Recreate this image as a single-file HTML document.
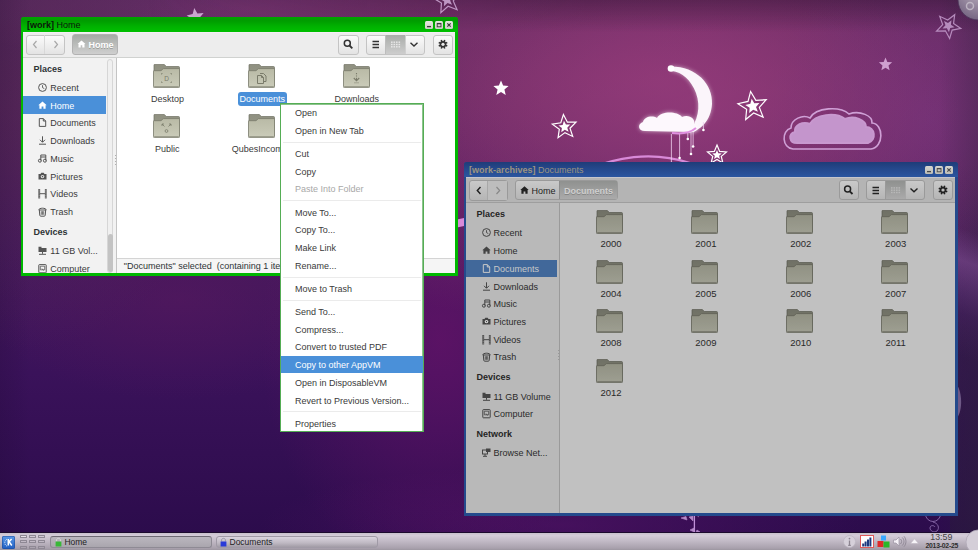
<!DOCTYPE html><html><head><meta charset="utf-8"><style>
*{margin:0;padding:0;box-sizing:border-box}
html,body{width:978px;height:550px;overflow:hidden;font-family:"Liberation Sans",sans-serif;font-size:9px;color:#2e3436;background:#3a1558}
.a{position:absolute}
.t{position:absolute;white-space:nowrap;line-height:12px;height:12px}
.b{font-weight:bold}
.btn{position:absolute;border:1px solid #c4c4c4;border-radius:3px;background:linear-gradient(#fbfbfb,#e3e3e3)}
.ic{position:absolute;overflow:visible}
</style></head><body>
<div class="a" style="left:0;top:0;width:978px;height:533px;background:
radial-gradient(ellipse 260px 150px at 700px 110px, rgba(150,60,125,0.6), rgba(150,60,125,0) 100%),
radial-gradient(ellipse 160px 180px at 930px 120px, rgba(118,52,124,0.7), rgba(118,52,124,0) 100%),
radial-gradient(ellipse 540px 250px at 660px 80px, rgba(140,56,116,0.98), rgba(140,56,116,0) 100%),
radial-gradient(ellipse 180px 240px at 440px 340px, rgba(100,18,104,0.75), rgba(100,18,104,0) 100%),
radial-gradient(ellipse 300px 60px at 560px 525px, rgba(80,18,100,0.7), rgba(80,18,100,0) 100%),
radial-gradient(ellipse 200px 260px at 30px 90px, rgba(90,45,90,0.5), rgba(90,45,90,0) 100%),
radial-gradient(ellipse 300px 60px at 250px 10px, rgba(112,50,110,0.85), rgba(112,50,110,0) 100%),
radial-gradient(ellipse 200px 100px at 180px 300px, rgba(90,24,95,0.5), rgba(90,24,95,0) 100%),
linear-gradient(180deg,#4e2456 0%,#512058 20%,#461a5c 45%,#3a125a 70%,#2c0c4c 100%);"></div>
<div class="a" style="left:0;top:0;width:978px;height:32px;background:linear-gradient(rgba(30,10,35,0.35),rgba(30,10,35,0));-webkit-mask-image:linear-gradient(90deg,rgba(0,0,0,0) 15%,#000 60%);mask-image:linear-gradient(90deg,rgba(0,0,0,0) 15%,#000 60%)"></div>
<div class="a" style="left:940px;top:0;width:38px;height:533px;background:linear-gradient(90deg,rgba(45,35,60,0),rgba(45,35,60,0.3))"></div>
<div class="a" style="left:0;top:0;width:30px;height:533px;background:linear-gradient(90deg,rgba(20,5,35,0.15),rgba(20,5,35,0))"></div>
<div class="a" style="left:950px;top:160px;width:28px;height:373px;background:linear-gradient(rgba(40,30,55,0) 0%,rgba(40,30,55,0.1) 25%,rgba(40,30,55,0.4) 45%,rgba(40,30,55,0.4) 100%)"></div>
<div class="a" style="left:940px;top:170px;width:38px;height:200px;background:linear-gradient(200deg,rgba(130,80,150,0) 30%,rgba(130,80,150,0.55) 45%,rgba(100,50,130,0.2) 70%,rgba(100,50,130,0) 90%)"></div>
<svg class="a" style="left:0;top:0" width="978" height="533"><defs><filter id="glow" x="-50%" y="-50%" width="200%" height="200%"><feGaussianBlur stdDeviation="2.2"/></filter></defs><path d="M194.25,8.09 L197.42,13.38 L203.59,13.05 L199.54,17.71 L201.75,23.47 L196.07,21.06 L191.27,24.95 L191.81,18.80 L186.64,15.44 L192.65,14.05Z" fill="#c9a6cf"/><path d="M954.70,14.71 L953.56,23.46 L960.82,28.46 L952.15,30.08 L949.64,38.53 L945.42,30.79 L936.61,31.01 L942.67,24.60 L939.74,16.29 L947.70,20.07Z" fill="none" stroke="#c49ccc" stroke-width="1.2" opacity="0.85"/><path d="M951.50,20.26 L950.93,24.63 L954.56,27.13 L950.23,27.94 L948.97,32.16 L946.86,28.29 L942.45,28.40 L945.48,25.20 L944.02,21.04 L948.00,22.94Z" fill="#c49ccc" opacity="0.85"/><path d="M444.57,-13.79 L449.76,-5.66 L459.36,-6.57 L453.24,0.88 L457.07,9.73 L448.09,6.20 L440.86,12.58 L441.44,2.96 L433.14,-1.95 L442.47,-4.38Z" fill="none" stroke="#c9a3cf" stroke-width="1.2" opacity="0.9"/><path d="M445.78,-6.89 L448.38,-2.83 L453.18,-3.29 L450.12,0.44 L452.04,4.86 L447.55,3.10 L443.93,6.29 L444.22,1.48 L440.07,-0.97 L444.73,-2.19Z" fill="#c9a3cf" opacity="0.9"/><path d="M501.00,80.50 L503.12,85.59 L508.61,86.03 L504.42,89.61 L505.70,94.97 L501.00,92.10 L496.30,94.97 L497.58,89.61 L493.39,86.03 L498.88,85.59Z" fill="#ffffff" stroke="none" stroke-width="1" opacity="1"/><path d="M563.41,114.55 L567.40,122.18 L576.01,122.12 L569.98,128.27 L572.70,136.43 L564.99,132.60 L558.06,137.71 L559.32,129.20 L552.32,124.19 L560.81,122.75Z" fill="none" stroke="#ffffff" stroke-width="1.2" opacity="1"/><path d="M563.96,120.77 L565.95,124.59 L570.25,124.56 L567.24,127.63 L568.60,131.72 L564.75,129.80 L561.28,132.36 L561.91,128.10 L558.41,125.59 L562.65,124.88Z" fill="#ffffff" opacity="1"/><path d="M750.61,91.45 L755.87,100.34 L766.18,99.72 L759.35,107.47 L763.12,117.09 L753.64,112.98 L745.66,119.54 L746.63,109.26 L737.93,103.70 L748.01,101.44Z" fill="none" stroke="#ffffff" stroke-width="1.2" opacity="1"/><path d="M751.66,98.87 L754.28,103.32 L759.44,103.01 L756.02,106.89 L757.91,111.70 L753.17,109.64 L749.18,112.92 L749.67,107.78 L745.31,105.00 L750.36,103.87Z" fill="#ffffff" opacity="1"/><path d="M717.00,145.00 L719.65,151.36 L726.51,151.91 L721.28,156.39 L722.88,163.09 L717.00,159.50 L711.12,163.09 L712.72,156.39 L707.49,151.91 L714.35,151.36Z" fill="none" stroke="#ffffff" stroke-width="1.2" opacity="1"/><path d="M717.00,150.00 L718.32,153.18 L721.76,153.45 L719.14,155.70 L719.94,159.05 L717.00,157.25 L714.06,159.05 L714.86,155.70 L712.24,153.45 L715.68,153.18Z" fill="#ffffff" opacity="1"/><path d="M885.50,57.50 L887.35,61.95 L892.16,62.34 L888.50,65.47 L889.61,70.16 L885.50,67.65 L881.39,70.16 L882.50,65.47 L878.84,62.34 L883.65,61.95Z" fill="#cfa0d0" stroke="none" stroke-width="1" opacity="1"/><path d="M797,143 C789,143 788,134 795,132 C794,125 803,121 810,124 C815,114 836,112 845,119 C854,115 866,120 866,127 C875,127 877,140 868,143 Z" fill="#c495cc" stroke="#c898cf" stroke-width="2"/><path d="M793,149 C782,148 781,131 791,128 C791,119 803,114 810,118 C816,107 840,106 849,114 C860,110 873,116 872,123 C884,124 884,147 871,149 Z" fill="none" stroke="#cfa0d6" stroke-width="1.6"/><path d="M457,219.5 L464,218 L464,226 L457,227.5 Z" fill="#d98ad9"/><path d="M585,170 C615,158 650,150 690,163" fill="none" stroke="#d88ad8" stroke-width="2.2"/><path d="M670,66.5 C696,66 713,84 712,104 C711,120 701,131 688,133 C698,121 701,107 696,93 C691,80 682,72 672,71 Z" fill="#ffffff" opacity="0.55" filter="url(#glow)"/><path d="M670,66.5 C696,66 713,84 712,104 C711,120 701,131 688,133 C698,121 701,107 696,93 C691,80 682,72 672,71 Z" fill="#fbf5fb"/><circle cx="671" cy="68.5" r="3.3" fill="#ffffff"/><path d="M671.4,134 V163" stroke="#f0d0f0" stroke-width="0.8"/><circle cx="671.4" cy="163" r="1.3" fill="#fff"/><path d="M679.6,133 V158" stroke="#f0d0f0" stroke-width="0.8"/><circle cx="679.6" cy="158" r="1.3" fill="#fff"/><path d="M687.8,132 V139" stroke="#f0d0f0" stroke-width="0.8"/><circle cx="687.8" cy="139" r="1.3" fill="#fff"/><path d="M691,132 V154" stroke="#f0d0f0" stroke-width="0.8"/><circle cx="691" cy="154" r="1.3" fill="#fff"/><path d="M693.1,131 V146.5" stroke="#f0d0f0" stroke-width="0.8"/><circle cx="693.1" cy="146.5" r="1.3" fill="#fff"/><path d="M703.4,122 V130" stroke="#f0d0f0" stroke-width="0.8"/><circle cx="703.4" cy="130" r="1.3" fill="#fff"/><path d="M645,131 C638,131 637,124 643,122 C644,117 652,115 657,118 C661,111 677,111 682,117 C689,114 696,119 694,124 C699,126 698,132 692,132 Z" fill="#ffffff" opacity="0.6" filter="url(#glow)"/><path d="M645,131 C638,131 637,124 643,122 C644,117 652,115 657,118 C661,111 677,111 682,117 C689,114 696,119 694,124 C699,126 698,132 692,132 Z" fill="#fdf8fd"/><path d="M672,133 C680,134 690,133 696,128" fill="none" stroke="#e090e0" stroke-width="2"/><path d="M694.4,516 V532" stroke="#c090d8" stroke-width="1.3"/><path d="M681,518 L686,516.5 L687,520 Z M689,517 L693,516 L693,521 Z M697,515.5 L699,517 M690,530 L694,528 L694,532 Z M697,530 L700,532 L696,532 Z" fill="#b488c8" stroke="#b488c8" stroke-width="0.6"/><circle cx="933" cy="514" r="7.5" fill="none" stroke="#8a6aaa" stroke-width="0.9"/><path d="M933,522 C938,523 940,528 937,531 C934,533 930,531 930,528 C930,525 934,525 935,527" fill="none" stroke="#8a6aaa" stroke-width="0.9"/><path d="M957,385 C962,392 963,410 957,418 Z" fill="#9a86b0" opacity="0.6"/><defs><radialGradient id="cash" cx="0.55" cy="0.2" r="0.9"><stop offset="0" stop-color="#f4f0f4"/><stop offset="0.3" stop-color="#a89cae"/><stop offset="0.85" stop-color="#7a6a86"/><stop offset="1" stop-color="#5e4a6c"/></radialGradient></defs><circle cx="978" cy="0" r="20" fill="url(#cash)" stroke="#4a3458" stroke-width="0.8"/><circle cx="970" cy="6" r="3.5" fill="none" stroke="#c8c0cc" stroke-width="1.5" opacity="0.8"/></svg>
<svg width="0" height="0" style="position:absolute">
<defs>
<linearGradient id="fgF" x1="0" y1="0" x2="0" y2="1"><stop offset="0" stop-color="#b9baa6"/><stop offset="0.6" stop-color="#c3c4b1"/><stop offset="1" stop-color="#cbccba"/></linearGradient>
<linearGradient id="fgD" x1="0" y1="0" x2="0" y2="1"><stop offset="0" stop-color="#8f9080"/><stop offset="1" stop-color="#9d9e8c"/></linearGradient>
<symbol id="folder" viewBox="0 0 27 24">
<path d="M1,1.2 Q1,0.2 2,0.2 H11 L13.3,2.5 H25.5 Q26.5,2.5 26.5,3.5 V22 H1 Z" fill="url(#fgD)" stroke="#6f7061" stroke-width="0.7"/>
<path d="M0.4,7.3 Q0.4,6.7 1,6.7 H8 L10.3,4.6 H26 Q26.6,4.6 26.6,5.2 V22.6 Q26.6,23.6 25.6,23.6 H1.4 Q0.4,23.6 0.4,22.6 Z" fill="url(#fgF)" stroke="#77786a" stroke-width="0.8"/>
<path d="M1.2,22.6 H25.8" stroke="#8a8b7c" stroke-width="0.8"/>
</symbol>
</defs></svg>
<div class="a" style="left:21px;top:17px;width:437px;height:259px;background:#00b800;border-radius:3px 3px 0 0"></div>
<div class="a" style="left:21px;top:17px;width:437px;height:15px;border-radius:3px 3px 0 0;background:linear-gradient(#00a400,#009c00 25%,#00b000 60%,#00c000)"></div>
<div class="a" style="left:23px;top:32px;width:432px;height:241px;background:#ededed"></div>
<div class="a" style="left:23px;top:32px;width:432px;height:1px;background:#f6eef6"></div>
<div class="t " style="left:27px;top:19px;color:#0a1a0a;"><b>[work]</b> Home</div>
<div class="a" style="left:424.5px;top:20.5px;width:8px;height:8px;border-radius:1.5px;background:linear-gradient(#e8e8e0,#cfcfc8)"></div>
<div class="a" style="left:435px;top:20.5px;width:8px;height:8px;border-radius:1.5px;background:linear-gradient(#e8e8e0,#cfcfc8)"></div>
<div class="a" style="left:445.3px;top:20.5px;width:8px;height:8px;border-radius:1.5px;background:linear-gradient(#e8e8e0,#cfcfc8)"></div>
<svg class="ic" style="left:424.5px;top:20.5px" width="8" height="8"><path d="M2,5.6 H6" stroke="#3a3a3a" stroke-width="1.3"/></svg>
<svg class="ic" style="left:435px;top:20.5px" width="8" height="8"><rect x="2.2" y="2.4" width="3.8" height="3.4" fill="none" stroke="#3a3a3a" stroke-width="0.9"/><path d="M2.2,2.7 H6" stroke="#3a3a3a" stroke-width="1.2"/></svg>
<svg class="ic" style="left:445.3px;top:20.5px" width="8" height="8"><path d="M2.3,2.3 L5.7,5.7 M5.7,2.3 L2.3,5.7" stroke="#3a3a3a" stroke-width="1.1"/></svg>
<div class="a" style="left:23px;top:57px;width:432px;height:1px;background:#d0d2d0"></div>
<div class="btn" style="left:26px;top:34.5px;width:39px;height:20px"></div>
<div class="a" style="left:44px;top:35px;width:1px;height:19px;background:#d8d8d8"></div>
<svg class="ic" style="left:26px;top:34px" width="39" height="21"><path d="M10.5,7 L7.5,10.5 L10.5,14 M28.5,7 L31.5,10.5 L28.5,14" fill="none" stroke="#a8a8a8" stroke-width="1.2"/></svg>
<div class="a" style="left:72px;top:34px;width:46px;height:20.5px;border:1px solid #b2b2b2;border-radius:3px;background:linear-gradient(#a6aaa6,#cfcfcf)"></div>
<svg class="ic" style="left:77px;top:40px" width="9" height="8"><path d="M0.5,4 L4.5,0.5 L8.5,4 L7.5,4 L7.5,7.5 L5.3,7.5 L5.3,5.3 L3.7,5.3 L3.7,7.5 L1.5,7.5 L1.5,4 Z" fill="#fff"/></svg>
<div class="t b" style="left:88.5px;top:39px;color:#ffffff;text-shadow:0 1px 0 rgba(0,0,0,0.25)">Home</div>
<div class="btn" style="left:338px;top:34.5px;width:21px;height:20px"></div>
<svg class="ic" style="left:338px;top:34px" width="21" height="21"><circle cx="9.3" cy="9.3" r="3" fill="none" stroke="#333" stroke-width="1.5"/><path d="M11.5,11.5 L14.3,14.3" stroke="#333" stroke-width="1.8"/></svg>
<div class="btn" style="left:366px;top:34.5px;width:59px;height:20px"></div>
<div class="a" style="left:386px;top:35px;width:19px;height:19px;background:linear-gradient(#a9aca9,#cdcdcd)"></div>
<div class="a" style="left:385px;top:35px;width:1px;height:19px;background:#bdbdbd"></div>
<div class="a" style="left:405px;top:35px;width:1px;height:19px;background:#d0d0d0"></div>
<svg class="ic" style="left:366px;top:34px" width="59" height="21"><path d="M6.5,7.5 H13 M6.5,10.5 H13 M6.5,13.5 H13" stroke="#333" stroke-width="1.3"/><g fill="#e8e8e8"><rect x="25.0" y="7.5" width="1.6" height="1.4"/><rect x="25.0" y="9.8" width="1.6" height="1.4"/><rect x="25.0" y="12.1" width="1.6" height="1.4"/><rect x="27.5" y="7.5" width="1.6" height="1.4"/><rect x="27.5" y="9.8" width="1.6" height="1.4"/><rect x="27.5" y="12.1" width="1.6" height="1.4"/><rect x="30.0" y="7.5" width="1.6" height="1.4"/><rect x="30.0" y="9.8" width="1.6" height="1.4"/><rect x="30.0" y="12.1" width="1.6" height="1.4"/><rect x="32.5" y="7.5" width="1.6" height="1.4"/><rect x="32.5" y="9.8" width="1.6" height="1.4"/><rect x="32.5" y="12.1" width="1.6" height="1.4"/></g><path d="M44.5,8.7 L48,12 L51.5,8.7" fill="none" stroke="#333" stroke-width="1.4"/></svg>
<div class="btn" style="left:433px;top:34.5px;width:20px;height:20px"></div>
<svg class="ic" style="left:433px;top:34px" width="20" height="21"><g fill="#333"><rect x="9.20" y="5.70" width="1.6" height="2.2" transform="rotate(22.5 10 10.3)"/><rect x="9.20" y="5.70" width="1.6" height="2.2" transform="rotate(67.5 10 10.3)"/><rect x="9.20" y="5.70" width="1.6" height="2.2" transform="rotate(112.5 10 10.3)"/><rect x="9.20" y="5.70" width="1.6" height="2.2" transform="rotate(157.5 10 10.3)"/><rect x="9.20" y="5.70" width="1.6" height="2.2" transform="rotate(202.5 10 10.3)"/><rect x="9.20" y="5.70" width="1.6" height="2.2" transform="rotate(247.5 10 10.3)"/><rect x="9.20" y="5.70" width="1.6" height="2.2" transform="rotate(292.5 10 10.3)"/><rect x="9.20" y="5.70" width="1.6" height="2.2" transform="rotate(337.5 10 10.3)"/><circle cx="10" cy="10.3" r="3.3"/></g><circle cx="10" cy="10.3" r="1.6" fill="#e8e8e8"/></svg>
<div class="a" style="left:23px;top:58px;width:93px;height:215px;background:#f2f2f2"></div>
<div class="a" style="left:116px;top:58px;width:1px;height:215px;background:#c4c4c4"></div>
<div class="a" style="left:107px;top:58.5px;width:6px;height:214px;border:1px solid #d6d6d6;border-radius:3px;background:#f0f0f0"></div>
<div class="a" style="left:107.5px;top:234px;width:5px;height:38px;border-radius:2.5px;background:#c3c3c3"></div>
<div class="a" style="left:114.5px;top:155px;width:1px;height:12px;background:repeating-linear-gradient(#b0b0b0 0 1px,transparent 1px 3px)"></div>
<div class="a" style="left:117px;top:58px;width:338px;height:200px;background:#ffffff"></div>
<div class="a" style="left:117px;top:258px;width:338px;height:15px;background:#f5f5f5;border-top:1px solid #d4d4d4"></div>
<div class="t " style="left:123.8px;top:259.6px;color:#2e3436;">"Documents" selected&nbsp; (containing 1 item)</div>
<div class="t b" style="left:33.4px;top:62.5px;color:#2e3436;">Places</div>
<svg class="ic" style="left:38px;top:83.0px" width="9" height="10"><circle cx="4.5" cy="4.5" r="3.9" fill="none" stroke="#555" stroke-width="1"/><path d="M4.5,2.2 V4.6 L6.3,5.6" fill="none" stroke="#555" stroke-width="0.9"/></svg>
<div class="t " style="left:50.3px;top:82.0px;color:#3a3a3a;">Recent</div>
<div class="a" style="left:23px;top:96.1px;width:82.5px;height:17.8px;background:#4a90d9"></div>
<svg class="ic" style="left:38px;top:100.7px" width="9" height="10"><path d="M0.3,4.2 L4.5,0.5 L8.7,4.2 H7.6 V7.8 H5.4 V5.6 H3.6 V7.8 H1.4 V4.2 Z" fill="#fff"/></svg>
<div class="t " style="left:50.3px;top:99.7px;color:#fff;">Home</div>
<svg class="ic" style="left:38px;top:118.4px" width="9" height="10"><path d="M1.3,0.6 H5.3 L7.7,3 V8.4 H1.3 Z M5.3,0.6 V3 H7.7" fill="none" stroke="#555" stroke-width="1"/></svg>
<div class="t " style="left:50.3px;top:117.4px;color:#3a3a3a;">Documents</div>
<svg class="ic" style="left:38px;top:136.1px" width="9" height="10"><path d="M4.5,0.3 V6 M2,3.8 L4.5,6.3 L7,3.8 M1,8.2 H8" fill="none" stroke="#555" stroke-width="1"/></svg>
<div class="t " style="left:50.3px;top:135.1px;color:#3a3a3a;">Downloads</div>
<svg class="ic" style="left:38px;top:153.8px" width="9" height="10"><path d="M2.8,6.6 V1 H7.8 V6.6 M2.8,3 H7.8" fill="none" stroke="#555" stroke-width="1"/><circle cx="1.9" cy="6.7" r="1.5" fill="none" stroke="#555" stroke-width="1"/><circle cx="6.9" cy="6.7" r="1.5" fill="none" stroke="#555" stroke-width="1"/></svg>
<div class="t " style="left:50.3px;top:152.8px;color:#3a3a3a;">Music</div>
<svg class="ic" style="left:38px;top:171.5px" width="9" height="10"><path d="M0.5,2 H2.5 L3.3,0.8 H5.7 L6.5,2 H8.5 V7.5 H0.5 Z" fill="#555"/><circle cx="4.5" cy="4.6" r="1.7" fill="#f2f2f2"/><circle cx="4.5" cy="4.6" r="0.8" fill="#555"/></svg>
<div class="t " style="left:50.3px;top:170.5px;color:#3a3a3a;">Pictures</div>
<svg class="ic" style="left:38px;top:189.2px" width="9" height="10"><path d="M1.2,0 V9.5 M7.8,0 V9.5" fill="none" stroke="#555" stroke-width="1.9" opacity="0.85"/><path d="M1.2,4.7 H7.8" stroke="#555" stroke-width="1"/><path d="M1.2,1.5 V2.3 M1.2,3.7 V4.5 M1.2,6 V6.8 M1.2,8 V8.8 M7.8,1.5 V2.3 M7.8,3.7 V4.5 M7.8,6 V6.8 M7.8,8 V8.8" stroke="#f2f2f2" stroke-width="0.6" opacity="0.5"/></svg>
<div class="t " style="left:50.3px;top:188.2px;color:#3a3a3a;">Videos</div>
<svg class="ic" style="left:38px;top:206.89999999999998px" width="9" height="10"><path d="M0.8,3 C0.8,0.6 8.2,0.6 8.2,3 M0.8,3 H8.2 M1.3,3 L1.8,8.3 Q1.9,9.2 2.8,9.2 H6.2 Q7.1,9.2 7.2,8.3 L7.7,3" fill="none" stroke="#555" stroke-width="1"/><path d="M3.3,4.2 V7.8 M4.5,4.2 V7.8 M5.7,4.2 V7.8" stroke="#555" stroke-width="0.8"/></svg>
<div class="t " style="left:50.3px;top:205.89999999999998px;color:#3a3a3a;">Trash</div>
<div class="t b" style="left:33.4px;top:225.6px;color:#2e3436;">Devices</div>
<svg class="ic" style="left:38px;top:246.1px" width="9" height="10"><path d="M0.5,0.8 H3.5 V2 H8.5 V6 H0.5 Z" fill="#555"/><path d="M4.5,6 V7.8 M1,8.3 H8" stroke="#555" stroke-width="1"/></svg>
<div class="t " style="left:50.3px;top:245.1px;color:#3a3a3a;">11 GB Vol...</div>
<svg class="ic" style="left:38px;top:263.8px" width="9" height="10"><rect x="0.8" y="0.6" width="7.4" height="8.2" rx="0.6" fill="none" stroke="#555" stroke-width="1"/><path d="M2.3,2.2 H6.7 V5.8 H2.3 Z" fill="none" stroke="#555" stroke-width="0.8"/><path d="M4,4.5 L5.5,6.5" stroke="#555" stroke-width="0.8"/></svg>
<div class="t " style="left:50.3px;top:262.8px;color:#3a3a3a;">Computer</div>
<div class="a" style="left:21px;top:272.5px;width:437px;height:3.5px;background:#00b800"></div>
<svg class="ic" style="left:153px;top:64px;" width="27" height="24" viewBox="0 0 27 24"><use href="#folder"/><path d="M8.5,10.5 V9.5 H9.5 M17.5,9.5 H18.5 V10.5 M18.5,17.5 V18.5 H17.5 M9.5,18.5 H8.5 V17.5" fill="none" stroke="#7a7b6a" stroke-width="0.8"/><text x="13.5" y="16.8" font-size="6.5" text-anchor="middle" fill="#7a7b6a" font-family="Liberation Sans">D</text></svg>
<div class="t " style="left:151px;top:92.6px;color:#3a3a3a;">Desktop</div>
<svg class="ic" style="left:248px;top:64px;" width="27" height="24" viewBox="0 0 27 24"><use href="#folder"/><path d="M9.5,11.5 H13.5 L15.5,13.5 V19.5 H9.5 Z M13.5,11.5 V13.5 H15.5" fill="none" stroke="#7a7b6a" stroke-width="1"/><path d="M12,9.5 H15.5 L18,12 V17.5 H16" fill="none" stroke="#7a7b6a" stroke-width="1"/></svg>
<div class="a" style="left:237.5px;top:91.8px;width:49px;height:14px;border-radius:3px;background:#4a90d9"></div>
<div class="t " style="left:239.5px;top:92.6px;color:#fff;">Documents</div>
<svg class="ic" style="left:343px;top:64px;" width="27" height="24" viewBox="0 0 27 24"><use href="#folder"/><path d="M13.5,9 V10.2 M13.5,11.4 V12.6 M13.5,13.8 V16.5 M10.8,14 L13.5,16.8 L16.2,14" fill="none" stroke="#7a7b6a" stroke-width="1.1"/><path d="M11,18.8 H16" stroke="#7a7b6a" stroke-width="0.8" opacity="0.6"/></svg>
<div class="t " style="left:334.6px;top:92.6px;color:#3a3a3a;">Downloads</div>
<svg class="ic" style="left:153px;top:113.5px;" width="27" height="24" viewBox="0 0 27 24"><use href="#folder"/><circle cx="13.5" cy="17" r="1.4" fill="none" stroke="#7a7b6a" stroke-width="0.8"/><path d="M9,10 L11.5,12.5 M9,10 V12 M9,10 H11 M18,10 L15.5,12.5 M18,10 V12 M18,10 H16" fill="none" stroke="#7a7b6a" stroke-width="0.8"/></svg>
<div class="t " style="left:155px;top:142.7px;color:#3a3a3a;">Public</div>
<svg class="ic" style="left:248px;top:113.5px;" width="27" height="24" viewBox="0 0 27 24"><use href="#folder"/></svg>
<div class="t " style="left:231.8px;top:142.7px;color:#3a3a3a;">QubesIncoming</div>
<div class="a" style="left:464px;top:162px;width:494px;height:354px;background:#244a8c;border-radius:3px 3px 0 0"></div>
<div class="a" style="left:464px;top:162px;width:494px;height:15px;border-radius:3px 3px 0 0;background:linear-gradient(#1f3c78,#24478a 40%,#2b56a0)"></div>
<div class="a" style="left:466px;top:177px;width:489px;height:336px;background:#b4b4b4"></div>
<div class="a" style="left:466px;top:177px;width:489px;height:1px;background:#c6c6cc"></div>
<div class="t " style="left:469px;top:164px;color:#9c9480;"><b>[work-archives]</b> Documents</div>
<div class="a" style="left:924.5px;top:166.3px;width:8px;height:8px;border-radius:1.5px;background:linear-gradient(#d6d6cf,#bdbdb6)"></div>
<div class="a" style="left:935px;top:166.3px;width:8px;height:8px;border-radius:1.5px;background:linear-gradient(#d6d6cf,#bdbdb6)"></div>
<div class="a" style="left:945.3px;top:166.3px;width:8px;height:8px;border-radius:1.5px;background:linear-gradient(#d6d6cf,#bdbdb6)"></div>
<svg class="ic" style="left:924.5px;top:166.3px" width="8" height="8"><path d="M2,5.6 H6" stroke="#4a4a4a" stroke-width="1.3"/></svg>
<svg class="ic" style="left:935px;top:166.3px" width="8" height="8"><rect x="2.2" y="2.4" width="3.8" height="3.4" fill="none" stroke="#4a4a4a" stroke-width="0.9"/><path d="M2.2,2.7 H6" stroke="#4a4a4a" stroke-width="1.2"/></svg>
<svg class="ic" style="left:945.3px;top:166.3px" width="8" height="8"><path d="M2.3,2.3 L5.7,5.7 M5.7,2.3 L2.3,5.7" stroke="#4a4a4a" stroke-width="1.1"/></svg>
<div class="a" style="left:466px;top:202px;width:489px;height:1px;background:#9e9e9e"></div>
<div style="position:absolute;border:1px solid #9a9a9a;border-radius:3px;background:linear-gradient(#c9c9c9,#b5b5b5);left:469px;top:180px;width:39px;height:21px"></div>
<div class="a" style="left:488px;top:181px;width:19px;height:19px;background:#bdbdbd"></div>
<div class="a" style="left:487px;top:181px;width:1px;height:19px;background:#a8a8a8"></div>
<svg class="ic" style="left:469px;top:180px" width="39" height="21"><path d="M11.5,7 L8.3,10.5 L11.5,14" fill="none" stroke="#1e1e1e" stroke-width="1.4"/><path d="M27.5,7 L30.7,10.5 L27.5,14" fill="none" stroke="#888" stroke-width="1.2"/></svg>
<div style="position:absolute;border:1px solid #9a9a9a;border-radius:3px;background:linear-gradient(#c9c9c9,#b5b5b5);left:515px;top:180px;width:103px;height:20px"></div>
<div class="a" style="left:560px;top:181px;width:57px;height:18px;background:linear-gradient(#8f918f,#aaaaaa)"></div>
<div class="a" style="left:559px;top:181px;width:1px;height:18px;background:#8c8c8c"></div>
<svg class="ic" style="left:520px;top:186px" width="9" height="8"><path d="M0.3,4 L4.5,0.3 L8.7,4 H7.6 V7.8 H5.4 V5.6 H3.6 V7.8 H1.4 V4 Z" fill="#222"/></svg>
<div class="t " style="left:531.5px;top:185px;color:#222;">Home</div>
<div class="t b" style="left:564px;top:185px;color:#cfcfcf;text-shadow:0 1px 0 rgba(0,0,0,0.2)">Documents</div>
<div style="position:absolute;border:1px solid #9a9a9a;border-radius:3px;background:linear-gradient(#c9c9c9,#b5b5b5);left:838.5px;top:180px;width:20px;height:20px"></div>
<svg class="ic" style="left:838px;top:180px" width="21" height="21"><circle cx="9.6" cy="9.1" r="3" fill="none" stroke="#222" stroke-width="1.5"/><path d="M11.8,11.3 L14.5,14" stroke="#222" stroke-width="1.8"/></svg>
<div style="position:absolute;border:1px solid #9a9a9a;border-radius:3px;background:linear-gradient(#c9c9c9,#b5b5b5);left:866px;top:180px;width:59px;height:20px"></div>
<div class="a" style="left:886px;top:181px;width:19px;height:18px;background:linear-gradient(#8f918f,#aaaaaa)"></div>
<div class="a" style="left:885px;top:181px;width:1px;height:18px;background:#9a9a9a"></div>
<div class="a" style="left:905px;top:181px;width:1px;height:18px;background:#a8a8a8"></div>
<svg class="ic" style="left:866px;top:180px" width="59" height="21"><path d="M6.5,7.5 H13 M6.5,10.5 H13 M6.5,13.5 H13" stroke="#222" stroke-width="1.3"/><g fill="#b8b8b8"><rect x="25.0" y="7.2" width="1.6" height="1.4"/><rect x="25.0" y="9.5" width="1.6" height="1.4"/><rect x="25.0" y="11.8" width="1.6" height="1.4"/><rect x="27.5" y="7.2" width="1.6" height="1.4"/><rect x="27.5" y="9.5" width="1.6" height="1.4"/><rect x="27.5" y="11.8" width="1.6" height="1.4"/><rect x="30.0" y="7.2" width="1.6" height="1.4"/><rect x="30.0" y="9.5" width="1.6" height="1.4"/><rect x="30.0" y="11.8" width="1.6" height="1.4"/><rect x="32.5" y="7.2" width="1.6" height="1.4"/><rect x="32.5" y="9.5" width="1.6" height="1.4"/><rect x="32.5" y="11.8" width="1.6" height="1.4"/></g><path d="M44.5,8.5 L48,11.8 L51.5,8.5" fill="none" stroke="#222" stroke-width="1.4"/></svg>
<div style="position:absolute;border:1px solid #9a9a9a;border-radius:3px;background:linear-gradient(#c9c9c9,#b5b5b5);left:932.5px;top:180px;width:20px;height:20px"></div>
<svg class="ic" style="left:932.5px;top:180px" width="20" height="20"><g fill="#222"><rect x="9.20" y="5.40" width="1.6" height="2.2" transform="rotate(22.5 10 10)"/><rect x="9.20" y="5.40" width="1.6" height="2.2" transform="rotate(67.5 10 10)"/><rect x="9.20" y="5.40" width="1.6" height="2.2" transform="rotate(112.5 10 10)"/><rect x="9.20" y="5.40" width="1.6" height="2.2" transform="rotate(157.5 10 10)"/><rect x="9.20" y="5.40" width="1.6" height="2.2" transform="rotate(202.5 10 10)"/><rect x="9.20" y="5.40" width="1.6" height="2.2" transform="rotate(247.5 10 10)"/><rect x="9.20" y="5.40" width="1.6" height="2.2" transform="rotate(292.5 10 10)"/><rect x="9.20" y="5.40" width="1.6" height="2.2" transform="rotate(337.5 10 10)"/><circle cx="10" cy="10" r="3.3"/></g><circle cx="10" cy="10" r="1.6" fill="#bdbdbd"/></svg>
<div class="a" style="left:466px;top:203px;width:93.5px;height:310px;background:#b9b9b9"></div>
<div class="a" style="left:559px;top:203px;width:1px;height:310px;background:#9a9a9a"></div>
<div class="a" style="left:560px;top:203px;width:395px;height:310px;background:#c1c1c1"></div>
<div class="a" style="left:557.5px;top:350px;width:1px;height:12px;background:repeating-linear-gradient(#999 0 1px,transparent 1px 3px)"></div>
<div class="t b" style="left:476.5px;top:207.7px;color:#252525;">Places</div>
<svg class="ic" style="left:481.5px;top:228.4px" width="9" height="10"><circle cx="4.5" cy="4.5" r="3.9" fill="none" stroke="#444" stroke-width="1"/><path d="M4.5,2.2 V4.6 L6.3,5.6" fill="none" stroke="#444" stroke-width="0.9"/></svg>
<div class="t " style="left:493.5px;top:227.4px;color:#2a2a2a;">Recent</div>
<svg class="ic" style="left:481.5px;top:246.1px" width="9" height="10"><path d="M0.3,4.2 L4.5,0.5 L8.7,4.2 H7.6 V7.8 H5.4 V5.6 H3.6 V7.8 H1.4 V4.2 Z" fill="#444"/></svg>
<div class="t " style="left:493.5px;top:245.1px;color:#2a2a2a;">Home</div>
<div class="a" style="left:466px;top:259.6px;width:91px;height:17.5px;background:#41689a"></div>
<svg class="ic" style="left:481.5px;top:263.8px" width="9" height="10"><path d="M1.3,0.6 H5.3 L7.7,3 V8.4 H1.3 Z M5.3,0.6 V3 H7.7" fill="none" stroke="#c8c8c8" stroke-width="1"/></svg>
<div class="t " style="left:493.5px;top:262.8px;color:#c8c8c8;">Documents</div>
<svg class="ic" style="left:481.5px;top:281.5px" width="9" height="10"><path d="M4.5,0.3 V6 M2,3.8 L4.5,6.3 L7,3.8 M1,8.2 H8" fill="none" stroke="#444" stroke-width="1"/></svg>
<div class="t " style="left:493.5px;top:280.5px;color:#2a2a2a;">Downloads</div>
<svg class="ic" style="left:481.5px;top:299.2px" width="9" height="10"><path d="M2.8,6.6 V1 H7.8 V6.6 M2.8,3 H7.8" fill="none" stroke="#444" stroke-width="1"/><circle cx="1.9" cy="6.7" r="1.5" fill="none" stroke="#444" stroke-width="1"/><circle cx="6.9" cy="6.7" r="1.5" fill="none" stroke="#444" stroke-width="1"/></svg>
<div class="t " style="left:493.5px;top:298.2px;color:#2a2a2a;">Music</div>
<svg class="ic" style="left:481.5px;top:316.9px" width="9" height="10"><path d="M0.5,2 H2.5 L3.3,0.8 H5.7 L6.5,2 H8.5 V7.5 H0.5 Z" fill="#444"/><circle cx="4.5" cy="4.6" r="1.7" fill="#f2f2f2"/><circle cx="4.5" cy="4.6" r="0.8" fill="#444"/></svg>
<div class="t " style="left:493.5px;top:315.9px;color:#2a2a2a;">Pictures</div>
<svg class="ic" style="left:481.5px;top:334.6px" width="9" height="10"><path d="M1.2,0 V9.5 M7.8,0 V9.5" fill="none" stroke="#444" stroke-width="1.9" opacity="0.85"/><path d="M1.2,4.7 H7.8" stroke="#444" stroke-width="1"/><path d="M1.2,1.5 V2.3 M1.2,3.7 V4.5 M1.2,6 V6.8 M1.2,8 V8.8 M7.8,1.5 V2.3 M7.8,3.7 V4.5 M7.8,6 V6.8 M7.8,8 V8.8" stroke="#f2f2f2" stroke-width="0.6" opacity="0.5"/></svg>
<div class="t " style="left:493.5px;top:333.6px;color:#2a2a2a;">Videos</div>
<svg class="ic" style="left:481.5px;top:352.3px" width="9" height="10"><path d="M0.8,3 C0.8,0.6 8.2,0.6 8.2,3 M0.8,3 H8.2 M1.3,3 L1.8,8.3 Q1.9,9.2 2.8,9.2 H6.2 Q7.1,9.2 7.2,8.3 L7.7,3" fill="none" stroke="#444" stroke-width="1"/><path d="M3.3,4.2 V7.8 M4.5,4.2 V7.8 M5.7,4.2 V7.8" stroke="#444" stroke-width="0.8"/></svg>
<div class="t " style="left:493.5px;top:351.3px;color:#2a2a2a;">Trash</div>
<div class="t b" style="left:476.5px;top:371px;color:#252525;">Devices</div>
<svg class="ic" style="left:481.5px;top:391.5px" width="9" height="10"><path d="M0.5,0.8 H3.5 V2 H8.5 V6 H0.5 Z" fill="#444"/><path d="M4.5,6 V7.8 M1,8.3 H8" stroke="#444" stroke-width="1"/></svg>
<div class="t " style="left:493.5px;top:390.5px;color:#2a2a2a;">11 GB Volume</div>
<svg class="ic" style="left:481.5px;top:409.2px" width="9" height="10"><rect x="0.8" y="0.6" width="7.4" height="8.2" rx="0.6" fill="none" stroke="#444" stroke-width="1"/><path d="M2.3,2.2 H6.7 V5.8 H2.3 Z" fill="none" stroke="#444" stroke-width="0.8"/><path d="M4,4.5 L5.5,6.5" stroke="#444" stroke-width="0.8"/></svg>
<div class="t " style="left:493.5px;top:408.2px;color:#2a2a2a;">Computer</div>
<div class="t b" style="left:476.5px;top:427.6px;color:#252525;">Network</div>
<svg class="ic" style="left:481.5px;top:448.4px" width="9" height="10"><rect x="0.5" y="2" width="5" height="4" fill="none" stroke="#444" stroke-width="1"/><rect x="4" y="0.5" width="4.5" height="3.5" fill="#444"/><path d="M3,6 V8 M1,8.3 H5" stroke="#444" stroke-width="1"/></svg>
<div class="t " style="left:493.5px;top:447.4px;color:#2a2a2a;">Browse Net...</div>
<svg class="ic" style="left:596.0px;top:210.0px;filter:brightness(0.78) saturate(0.9);" width="27" height="24" viewBox="0 0 27 24"><use href="#folder"/></svg>
<div class="t" style="left:581.0px;top:238.3px;width:60px;text-align:center;font-size:9.5px;color:#2a2a2a">2000</div>
<svg class="ic" style="left:690.9px;top:210.0px;filter:brightness(0.78) saturate(0.9);" width="27" height="24" viewBox="0 0 27 24"><use href="#folder"/></svg>
<div class="t" style="left:675.9px;top:238.3px;width:60px;text-align:center;font-size:9.5px;color:#2a2a2a">2001</div>
<svg class="ic" style="left:785.8px;top:210.0px;filter:brightness(0.78) saturate(0.9);" width="27" height="24" viewBox="0 0 27 24"><use href="#folder"/></svg>
<div class="t" style="left:770.8px;top:238.3px;width:60px;text-align:center;font-size:9.5px;color:#2a2a2a">2002</div>
<svg class="ic" style="left:880.7px;top:210.0px;filter:brightness(0.78) saturate(0.9);" width="27" height="24" viewBox="0 0 27 24"><use href="#folder"/></svg>
<div class="t" style="left:865.7px;top:238.3px;width:60px;text-align:center;font-size:9.5px;color:#2a2a2a">2003</div>
<svg class="ic" style="left:596.0px;top:259.6px;filter:brightness(0.78) saturate(0.9);" width="27" height="24" viewBox="0 0 27 24"><use href="#folder"/></svg>
<div class="t" style="left:581.0px;top:287.7px;width:60px;text-align:center;font-size:9.5px;color:#2a2a2a">2004</div>
<svg class="ic" style="left:690.9px;top:259.6px;filter:brightness(0.78) saturate(0.9);" width="27" height="24" viewBox="0 0 27 24"><use href="#folder"/></svg>
<div class="t" style="left:675.9px;top:287.7px;width:60px;text-align:center;font-size:9.5px;color:#2a2a2a">2005</div>
<svg class="ic" style="left:785.8px;top:259.6px;filter:brightness(0.78) saturate(0.9);" width="27" height="24" viewBox="0 0 27 24"><use href="#folder"/></svg>
<div class="t" style="left:770.8px;top:287.7px;width:60px;text-align:center;font-size:9.5px;color:#2a2a2a">2006</div>
<svg class="ic" style="left:880.7px;top:259.6px;filter:brightness(0.78) saturate(0.9);" width="27" height="24" viewBox="0 0 27 24"><use href="#folder"/></svg>
<div class="t" style="left:865.7px;top:287.7px;width:60px;text-align:center;font-size:9.5px;color:#2a2a2a">2007</div>
<svg class="ic" style="left:596.0px;top:309.2px;filter:brightness(0.78) saturate(0.9);" width="27" height="24" viewBox="0 0 27 24"><use href="#folder"/></svg>
<div class="t" style="left:581.0px;top:337.1px;width:60px;text-align:center;font-size:9.5px;color:#2a2a2a">2008</div>
<svg class="ic" style="left:690.9px;top:309.2px;filter:brightness(0.78) saturate(0.9);" width="27" height="24" viewBox="0 0 27 24"><use href="#folder"/></svg>
<div class="t" style="left:675.9px;top:337.1px;width:60px;text-align:center;font-size:9.5px;color:#2a2a2a">2009</div>
<svg class="ic" style="left:785.8px;top:309.2px;filter:brightness(0.78) saturate(0.9);" width="27" height="24" viewBox="0 0 27 24"><use href="#folder"/></svg>
<div class="t" style="left:770.8px;top:337.1px;width:60px;text-align:center;font-size:9.5px;color:#2a2a2a">2010</div>
<svg class="ic" style="left:880.7px;top:309.2px;filter:brightness(0.78) saturate(0.9);" width="27" height="24" viewBox="0 0 27 24"><use href="#folder"/></svg>
<div class="t" style="left:865.7px;top:337.1px;width:60px;text-align:center;font-size:9.5px;color:#2a2a2a">2011</div>
<svg class="ic" style="left:596.0px;top:358.8px;filter:brightness(0.78) saturate(0.9);" width="27" height="24" viewBox="0 0 27 24"><use href="#folder"/></svg>
<div class="t" style="left:581.0px;top:386.5px;width:60px;text-align:center;font-size:9.5px;color:#2a2a2a">2012</div>
<div class="a" style="left:280px;top:103px;width:144px;height:329px;background:#fff;border:1px solid #55ad55;box-shadow:inset -1px -0px 0 #8cc48c, inset 0 1px 0 #8cc48c"></div>
<div class="t " style="left:294.9px;top:107.0px;color:#3a3a3a;">Open</div>
<div class="t " style="left:294.9px;top:124.69999999999999px;color:#3a3a3a;">Open in New Tab</div>
<div class="a" style="left:283px;top:141.6px;width:138px;height:1px;background:#ebebeb"></div>
<div class="t " style="left:294.9px;top:147.9px;color:#3a3a3a;">Cut</div>
<div class="t " style="left:294.9px;top:165.6px;color:#3a3a3a;">Copy</div>
<div class="t " style="left:294.9px;top:183.29999999999998px;color:#a8a8a8;">Paste Into Folder</div>
<div class="a" style="left:283px;top:200.2px;width:138px;height:1px;background:#ebebeb"></div>
<div class="t " style="left:294.9px;top:206.49999999999997px;color:#3a3a3a;">Move To...</div>
<div class="t " style="left:294.9px;top:224.19999999999996px;color:#3a3a3a;">Copy To...</div>
<div class="t " style="left:294.9px;top:241.89999999999995px;color:#3a3a3a;">Make Link</div>
<div class="t " style="left:294.9px;top:259.59999999999997px;color:#3a3a3a;">Rename...</div>
<div class="a" style="left:283px;top:276.5px;width:138px;height:1px;background:#ebebeb"></div>
<div class="t " style="left:294.9px;top:282.79999999999995px;color:#3a3a3a;">Move to Trash</div>
<div class="a" style="left:283px;top:299.7px;width:138px;height:1px;background:#ebebeb"></div>
<div class="t " style="left:294.9px;top:305.99999999999994px;color:#3a3a3a;">Send To...</div>
<div class="t " style="left:294.9px;top:323.69999999999993px;color:#3a3a3a;">Compress...</div>
<div class="t " style="left:294.9px;top:341.3999999999999px;color:#3a3a3a;">Convert to trusted PDF</div>
<div class="a" style="left:281px;top:356.1px;width:141.5px;height:17px;background:#4a90d9"></div>
<div class="t " style="left:294.9px;top:359.0999999999999px;color:#ffffff;">Copy to other AppVM</div>
<div class="t " style="left:294.9px;top:376.7999999999999px;color:#3a3a3a;">Open in DisposableVM</div>
<div class="t " style="left:294.9px;top:394.4999999999999px;color:#3a3a3a;">Revert to Previous Version...</div>
<div class="a" style="left:283px;top:411.4px;width:138px;height:1px;background:#ebebeb"></div>
<div class="t " style="left:294.9px;top:417.6999999999999px;color:#3a3a3a;">Properties</div>
<div class="a" style="left:0;top:532px;width:978px;height:1px;background:#1c0a2e"></div>
<div class="a" style="left:0;top:533px;width:978px;height:17px;background:linear-gradient(#c8c0cc,#d4ccd8 15%,#c0b8c4 50%,#a8a0ac 90%,#9c96a0)"></div>
<div class="a" style="left:2px;top:536px;width:12.5px;height:12.5px;border-radius:2px;background:linear-gradient(#5a9ae8,#1f5cc0);box-shadow:inset 0 0 0 0.5px #1a4a9a"></div>
<svg class="ic" style="left:2px;top:536px" width="13" height="13"><path d="M6.3,3 V9.5 M6.3,6.6 L9.6,3 M7.3,5.8 L9.8,9.5" stroke="#fff" stroke-width="1.5" fill="none"/><path d="M5,3.2 A3.8,3.8 0 0 0 5.5,10.3" fill="none" stroke="#fff" stroke-width="0.9" stroke-dasharray="1 0.9"/></svg>
<div class="a" style="left:19.6px;top:534.8px;width:7px;height:3.2px;border:1px solid #8e8894;border-radius:0.5px;background:#e8e2ea"></div>
<div class="a" style="left:19.6px;top:540px;width:7px;height:3.2px;border:1px solid #8e8894;border-radius:0.5px;background:transparent"></div>
<div class="a" style="left:19.6px;top:545.9px;width:7px;height:3.2px;border:1px solid #8e8894;border-radius:0.5px;background:transparent"></div>
<div class="a" style="left:28.8px;top:534.8px;width:7px;height:3.2px;border:1px solid #8e8894;border-radius:0.5px;background:transparent"></div>
<div class="a" style="left:28.8px;top:540px;width:7px;height:3.2px;border:1px solid #8e8894;border-radius:0.5px;background:transparent"></div>
<div class="a" style="left:28.8px;top:545.9px;width:7px;height:3.2px;border:1px solid #8e8894;border-radius:0.5px;background:transparent"></div>
<div class="a" style="left:38px;top:534.8px;width:7px;height:3.2px;border:1px solid #8e8894;border-radius:0.5px;background:transparent"></div>
<div class="a" style="left:38px;top:540px;width:7px;height:3.2px;border:1px solid #8e8894;border-radius:0.5px;background:transparent"></div>
<div class="a" style="left:38px;top:545.9px;width:7px;height:3.2px;border:1px solid #8e8894;border-radius:0.5px;background:transparent"></div>
<div class="a" style="left:50px;top:536px;width:162px;height:12px;border:1px solid #8e8a94;border-top-color:#6e6a74;border-radius:3px;background:linear-gradient(#bab6be,#aaa6ae)"></div>
<svg class="ic" style="left:55px;top:537px" width="7" height="10"><path d="M1.6,4.5 V3 C1.6,0.8 5.4,0.8 5.4,3 V4.5" fill="none" stroke="#d8d8d8" stroke-width="1"/><rect x="0.6" y="4.5" width="5.8" height="5" fill="#38b838"/></svg>
<div class="t" style="left:64.4px;top:536px;font-size:8.5px;color:#1e1e1e">Home</div>
<div class="a" style="left:215.5px;top:536px;width:162px;height:12px;border:1px solid #a09aa6;border-radius:3px;background:linear-gradient(#dad4de,#beb8c2 60%,#a29ca6)"></div>
<svg class="ic" style="left:219.5px;top:537px" width="7" height="10"><path d="M1.6,4.5 V3 C1.6,0.8 5.4,0.8 5.4,3 V4.5" fill="none" stroke="#9a98a8" stroke-width="1"/><rect x="0.6" y="4.5" width="5.8" height="5" fill="#2a3ad8"/></svg>
<div class="t" style="left:229.5px;top:536px;font-size:8.5px;color:#1e1e1e">Documents</div>
<svg class="ic" style="left:843px;top:535px" width="13" height="13"><circle cx="6.5" cy="6.5" r="6" fill="#d6d0da" stroke="#bdb6c2" stroke-width="0.8"/><circle cx="6.5" cy="3.6" r="0.9" fill="#8c8490"/><path d="M6.5,5.5 V10.3 M5.2,10.3 H7.8" stroke="#8c8490" stroke-width="1.3"/></svg>
<svg class="ic" style="left:860px;top:535px" width="14" height="13"><rect x="0.5" y="0.5" width="13" height="12" fill="#ffffff" stroke="#e05a5a" stroke-width="1"/><path d="M3.2,11.5 V8.5 M5.6,11.5 V6.5 M8,11.5 V4.5 M10.4,11.5 V2.5" stroke="#1e3a80" stroke-width="2"/></svg>
<svg class="ic" style="left:876.5px;top:535px" width="13" height="13"><rect x="4" y="0.5" width="5" height="5" fill="#3aa8ff"/><rect x="0.5" y="6" width="6" height="6" fill="#e02a2a"/><rect x="6.5" y="6.5" width="6" height="6" fill="#2ab82a"/></svg>
<svg class="ic" style="left:893px;top:535px" width="13" height="13"><path d="M0.5,5 H3 L6,2 V11 L3,8 H0.5 Z" fill="#f4f0f6" stroke="#9a92a0" stroke-width="0.7"/><path d="M7.5,4 C9,5.5 9,7.5 7.5,9 M9.3,2.5 C11.5,5 11.5,8 9.3,10.5 M11,1.3 C13.6,4.5 13.6,8.5 11,11.7" fill="none" stroke="#8a8290" stroke-width="0.9"/></svg>
<svg class="ic" style="left:910px;top:538px" width="9" height="6"><path d="M0.5,5.5 L4.5,0.8 L8.5,5.5 Z" fill="#f6f4f8" stroke="#b8b0bc" stroke-width="0.5"/></svg>
<div class="t" style="left:930.3px;top:531.3px;font-size:8.8px;color:#444">13:59</div>
<div class="t" style="left:925.4px;top:540.3px;font-size:6.8px;color:#2e2e2e;font-weight:bold;letter-spacing:-0.2px">2013-02-25</div>
<svg class="ic" style="left:965px;top:534px" width="13" height="16"><circle cx="13" cy="8" r="12" fill="#d4ced8" stroke="#b0a8b6" stroke-width="0.8"/></svg>
</body></html>
